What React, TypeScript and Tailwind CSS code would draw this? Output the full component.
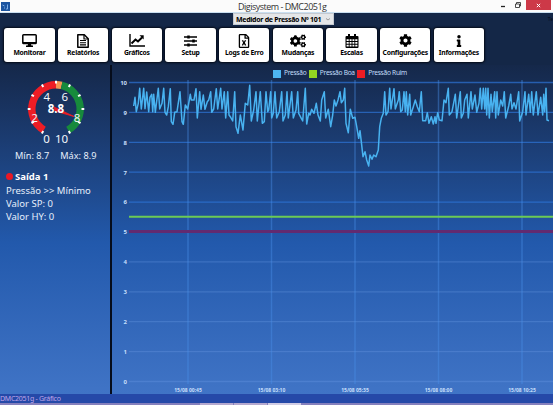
import type { ReactNode } from 'react'
import { FaRegFileExcel, FaCogs, FaCog, FaInfo } from 'react-icons/fa'

const buttons: { label: string; icon: ReactNode }[] = [
  { label: 'Monitorar', icon: <MonitorIcon /> },
  { label: 'Relatórios', icon: <ReportIcon /> },
  { label: 'Gráficos', icon: <TrendIcon /> },
  { label: 'Setup', icon: <SetupIcon /> },
  { label: 'Logs de Erro', icon: <FaRegFileExcel className="size-[14px]" /> },
  { label: 'Mudanças', icon: <FaCogs className="size-[16px]" /> },
  { label: 'Escalas', icon: <CalendarIcon /> },
  { label: 'Configurações', icon: <FaCog className="size-[13px]" /> },
  { label: 'Informações', icon: <FaInfo className="size-[12px]" /> },
]

const legend = [
  { label: 'Pressão', color: 'bg-[#4db5f0]' },
  { label: 'Pressão Boa', color: 'bg-[#93d522]' },
  { label: 'Pressão Ruim', color: 'bg-[#ec1d24]' },
]

// x offsets and readings, both in thirds of a pixel
const firstHalf = '71,138 75,112 79,155 85,130 89,85 94,147 101,85 105,146 110,96 116,155 120,112 125,103 128,155 131,103 136,157 145,85 149,147 156,130 161,85 165,157 170,165 175,140 181,86 184,185 189,193 194,157 201,155 210,95 216,185 220,193 226,135 233,147 241,103 244,120 252,120 258,86 262,174 269,95 273,148 280,105 285,148 292,125 296,120 302,95 305,157 311,147 319,86 323,147 332,85 336,147 343,95 347,174 353,95 357,165 362,172 368,183 374,95 378,200 384,220 391,165 399,210 406,130 413,135 419,76 424,183 431,150 438,95 442,183 451,95 457,190 463,185 468,95 473,155 476,150 482,95 485,174 490,160 495,95 500,174 508,155 515,95 519,183 526,165 531,95 535,174 545,95 550,174 558,150 563,95 566,160 574,175 578,183 586,85 590,192 596,160 600,165 605,148 612,160 619,130 624,165 631,183 635,120 643,95 647,174 655,148 662,200 668,165 673,120'
const secondHalf = '18,138 24,120 30,95 34,128 40,120 44,85 48,190 55,218 61,148 68,175 75,172 80,200 86,235 90,212 94,245 99,290 105,275 110,300 116,318 120,285 126,298 131,285 138,290 145,270 149,200 154,175 160,160 164,95 168,165 174,155 179,85 183,147 192,86 196,147 205,120 208,95 212,155 217,150 222,95 226,155 229,95 233,165 239,103 242,165 250,140 256,120 262,140 268,155 274,95 278,182 287,182 292,158 297,190 304,170 310,192 315,170 318,190 323,158 328,180 336,182 342,120 348,128 355,85 358,165 366,155 376,103 380,174 391,95 394,174 400,160 404,120 411,103 415,174 423,95 427,147 435,105 440,157 447,130 451,85 455,147 460,85 464,147 467,85 470,165 474,85 478,174 483,103 487,155 494,95 497,174 501,95 505,165 512,120 518,138 523,95 527,174 536,138 542,103 546,147 552,128 558,147 566,95 569,183 578,155 585,95 588,165 596,103 601,157 605,95 610,165 619,95 624,165 632,112 638,165 641,103 644,155 648,85 651,180 657,182'

function shift(points: string, dx: number) {
  return points.split(' ').map((p) => {
    const [x, y] = p.split(',').map(Number)
    return `${(x / 3 + dx).toFixed(1)},${(y / 3 - 20).toFixed(1)}`
  }).join(' ')
}

const series = `${shift(firstHalf, -3)} ${shift(secondHalf, 217)}`

function MonitorIcon() {
  return (
    <svg viewBox="0 0 15 13" className="h-[13px] w-[15px]">
      <rect x="0.8" y="0.8" width="13.4" height="8.8" rx="0.8" fill="none" stroke="#000" strokeWidth="1.5" />
      <path d="M1 8h13v2H1zM6 10h3l.4 1.500H11V13H4v-1.500h1.600z" />
    </svg>
  )
}

function ReportIcon() {
  return (
    <svg viewBox="0 0 12 14" className="h-[14px] w-3" fill="none" stroke="#000">
      <path d="M.8.8h6.500l3.900 3.900v8.500H.8z" strokeWidth="1.500" strokeLinejoin="round" />
      <path d="M7 .8V5h4.200" strokeWidth="1.200" />
      <path d="M3 6.500h6M3 8.700h6M3 10.900h6" strokeWidth="1.100" />
    </svg>
  )
}

function TrendIcon() {
  return (
    <svg viewBox="0 0 16 13" className="h-[13px] w-4" fill="none" stroke="#000">
      <path d="M1 0v12h15" strokeWidth="1.4" />
      <path d="M2.5 9.5l4-4 2.5 2 4-4" strokeWidth="2" />
      <path d="M10.5 1.2h4.2v4.2z" fill="#000" stroke="none" />
    </svg>
  )
}

function SetupIcon() {
  return (
    <svg viewBox="0 0 13 12" className="h-3 w-[13px]" stroke="#000">
      <path d="M0 2h13M0 6h13M0 10h13" strokeWidth="1.300" />
      <path d="M4.500.5v3M9.500 4.500v3M4.500 8.500v3" strokeWidth="2.500" />
    </svg>
  )
}

function CalendarIcon() {
  return (
    <svg viewBox="0 0 14 14" className="size-[14px]">
      <rect x="0.500" y="2" width="13" height="12" rx="1" />
      <path d="M3 0h2v4H3zM9 0h2v4H9z" />
      <path d="M1.600 6.200h10.800M1.600 8.900h10.800M1.600 11.700h10.800" stroke="#fff" strokeWidth="1.800" />
      <path d="M4.200 5v8M7 5v8M9.800 5v8" stroke="#000" strokeWidth="0.900" />
    </svg>
  )
}

function polar(value: number, r: number) {
  const a = ((120 + value * 30) * Math.PI) / 180
  return [32 + r * Math.cos(a), 32 + r * Math.sin(a)]
}

function arc(from: number, to: number) {
  const [x1, y1] = polar(from, 24.2)
  const [x2, y2] = polar(to, 24.2)
  return `M${x1} ${y1}A24.2 24.2 0 ${to - from > 6 ? 1 : 0} 1 ${x2} ${y2}`
}

function Gauge() {
  return (
    <svg viewBox="0 0 64 72" className="h-[72px] w-16" fontFamily="'Noto Sans', sans-serif" textAnchor="middle">
      <g fill="none" strokeWidth="7.4">
        <path d={arc(0, 5)} stroke="#ee1d25" />
        <path d={arc(5, 5.45)} stroke="#f59652" />
        <path d={arc(5.45, 10)} stroke="#178a3c" />
      </g>
      {Array.from({ length: 11 }, (_, i) => {
        const [x1, y1] = polar(i, 25.5)
        const [x2, y2] = polar(i, 28.3)
        return <path key={i} d={`M${x1} ${y1}L${x2} ${y2}`} stroke="#fff" strokeWidth="2" />
      })}
      <path d="M30 30l20 9.5-19-5.500z" fill="#ee1d25" stroke="#ee1d25" strokeWidth="0.9" />
      <g fill="#f3f6fb" fontSize="11.5">
        <text x="22.500" y="65.5">0</text>
        <text x="37.500" y="65.5">10</text>
        <text x="10.500" y="44.500">2</text>
        <text x="22.8" y="23.500">4</text>
        <text x="40.8" y="23.500">6</text>
        <text x="53" y="44.500">8</text>
      </g>
      <text x="32" y="36" fill="#fff" fontSize="11.500" fontWeight="700">8.8</text>
    </svg>
  )
}

function Chart() {
  return (
    <svg viewBox="0 0 440 314" className="block h-[314px] w-[440px]" fontFamily="'Noto Sans', sans-serif" fontWeight="700" fill="#c6defa">
      {Array.from({ length: 11 }, (_, i) => (
        <g key={i}>
          <path d={`M16 ${2.5 + i * 29.9}H440`} stroke={i < 5 ? '#2f7ae0' : '#6f9fe8'} strokeWidth="1.300" strokeOpacity={i < 5 ? 0.65 : 0.3} />
          <text x="14" y={4.800 + i * 29.9} fontSize="6" textAnchor="end">{10 - i}</text>
        </g>
      ))}
      {['15/08 00:45', '15/08 03:10', '15/08 05:35', '15/08 08:00', '15/08 10:25'].map((t, i) => (
        <g key={t}>
          <path d={`M${75 + i * 83.5} 0V304`} stroke="#4a8eea" strokeWidth="1.500" strokeOpacity="0.42" />
          <text x={75 + i * 83.5} y="311.500" fontSize="5" textAnchor="middle">{t}</text>
        </g>
      ))}
      <path d="M16 136.700H440" stroke="#6bcb55" strokeWidth="2" />
      <path d="M16 151.500H440" stroke="#622a70" strokeWidth="3" />
      <polyline points={series} fill="none" stroke="#48b2f0" strokeWidth="1.500" strokeLinejoin="round" />
    </svg>
  )
}

export default function App() {
  return (
    <div className="flex h-[405px] w-[553px] flex-col overflow-hidden bg-[#142747] font-['Noto_Sans',sans-serif]">
      {/* Title bar */}
      <header className="flex h-[13px] shrink-0 border-b border-[#c9dff0] bg-[#fbfbfb]">
        <div className="w-[238px] pt-0.5 pl-px">
          <svg viewBox="0 0 9 9" className="size-[9px]">
            <rect width="9" height="9" fill="#1c55a0" />
            <path d="M1.500 3l2 1M3 6h1M6.500 2.500v4.500H5" fill="none" stroke="#8dbcf0" strokeWidth="0.9" />
          </svg>
        </div>
        <h1 className="text-[9px] leading-[13px] tracking-[-0.5px] whitespace-nowrap text-[#333] font-['Open_Sans',sans-serif]">Digisystem - DMC2051g</h1>
        <div className="ml-auto flex pr-[2px]">
          <svg viewBox="0 0 26 10" className="h-[10px] w-[26px]" fill="none" stroke="#222">
            <path d="M1 6.500h4" strokeWidth="1.300" />
            <path d="M15.500 4h4v3.500h-4zM16.500 4V2.500h4v3.500h-1" strokeWidth="0.800" />
          </svg>
          <div className="grid h-[10px] w-[25px] place-items-center bg-[#cd3948]">
            <svg viewBox="0 0 6 6" className="size-[5px]" stroke="#fff" strokeWidth="1.200">
              <path d="M1 1l4 4M5 1L1 5" />
            </svg>
          </div>
        </div>
      </header>

      {/* Device picker and toolbar */}
      <div className="h-[52px] shrink-0">
        <div className="flex h-[12px] items-center justify-between pl-[233px]">
          <div className="flex h-[12px] w-[101px] items-center justify-between border border-[#c4c9d0] bg-[#e4e6e8] pr-[3px] pl-[2px]">
            <span className="text-[7px] leading-none font-bold tracking-[-0.3px] whitespace-nowrap text-black">Medidor de Pressão Nº 101</span>
            <svg viewBox="0 0 4 3" className="h-[3px] w-1 shrink-0" fill="none" stroke="#777" strokeWidth="0.700">
              <path d="M0 .5l2 1.500 2-1.500" />
            </svg>
          </div>
          <span className="text-[5px] leading-none text-[#060d1c]">Te</span>
        </div>
        <nav className="mt-[3px] flex gap-[3.400px] pl-[4.300px]">
          {buttons.map((b) => (
            <button key={b.label} className="flex h-[34px] w-[50.300px] shrink-0 flex-col items-center rounded-[3px] bg-white pt-[5px] text-black shadow-[0_0_2px_1px_#050b18]">
              <span className="grid h-[15px] place-items-center">{b.icon}</span>
              <span className="text-[6.800px] leading-[9px] font-bold tracking-[-0.25px] whitespace-nowrap">{b.label}</span>
            </button>
          ))}
        </nav>
      </div>

      <main className="flex h-[329px] shrink-0 bg-linear-to-b from-[#15284a] via-[#2259ac] via-[54%] to-[#4074c6]">
        <aside className="h-full w-[110px] shrink-0 pt-3 text-[9.200px] text-[#e6effc]">
          <div className="pl-[23.500px]"><Gauge /></div>
          <div className="flex gap-[11px] pl-[15px] leading-[14px] whitespace-nowrap">
            <span>Mín: 8.7</span>
            <span>Máx: 8.9</span>
          </div>
          <div className="pt-[7px] pl-[6px] text-[9.500px] leading-[13px] whitespace-nowrap">
            <p className="flex items-center gap-[2px] pb-px font-bold text-white">
              <i className="size-[7px] rounded-full bg-[#ea1824]" />
              Saída 1
            </p>
            <p>Pressão &gt;&gt; Mínimo</p>
            <p>Valor SP: 0</p>
            <p>Valor HY: 0</p>
          </div>
        </aside>
        <section className="h-full w-[443px] border-l-2 border-[#050c1b] pl-px">
          <div className="flex h-[17px] items-center gap-[2.500px] pl-[160px] -mb-[2px]">
            {legend.map((l) => (
              <div key={l.label} className="flex items-center gap-[3px] text-[6.600px] leading-none tracking-[-0.28px] whitespace-nowrap text-[#c3defa]">
                <i className={`size-[8px] shrink-0 ${l.color}`} />
                {l.label}
              </div>
            ))}
          </div>
          <Chart />
        </section>
      </main>

      {/* Status line */}
      <footer className="h-[9px] shrink-0 bg-[#2549a8] text-[7px] leading-[10px] tracking-[-0.28px] text-[#c0a5e8]">DMC2051g - Gráfico</footer>
      <div className="flex h-[2px] shrink-0 gap-px bg-[#8580bd] pl-[200px]">
        <i className="w-[33px] bg-[#b5a9cf]" />
        <i className="w-[33px] bg-[#b5a9cf]" />
        <i className="w-[33px] bg-[#d0cce4]" />
      </div>
    </div>
  )
}
